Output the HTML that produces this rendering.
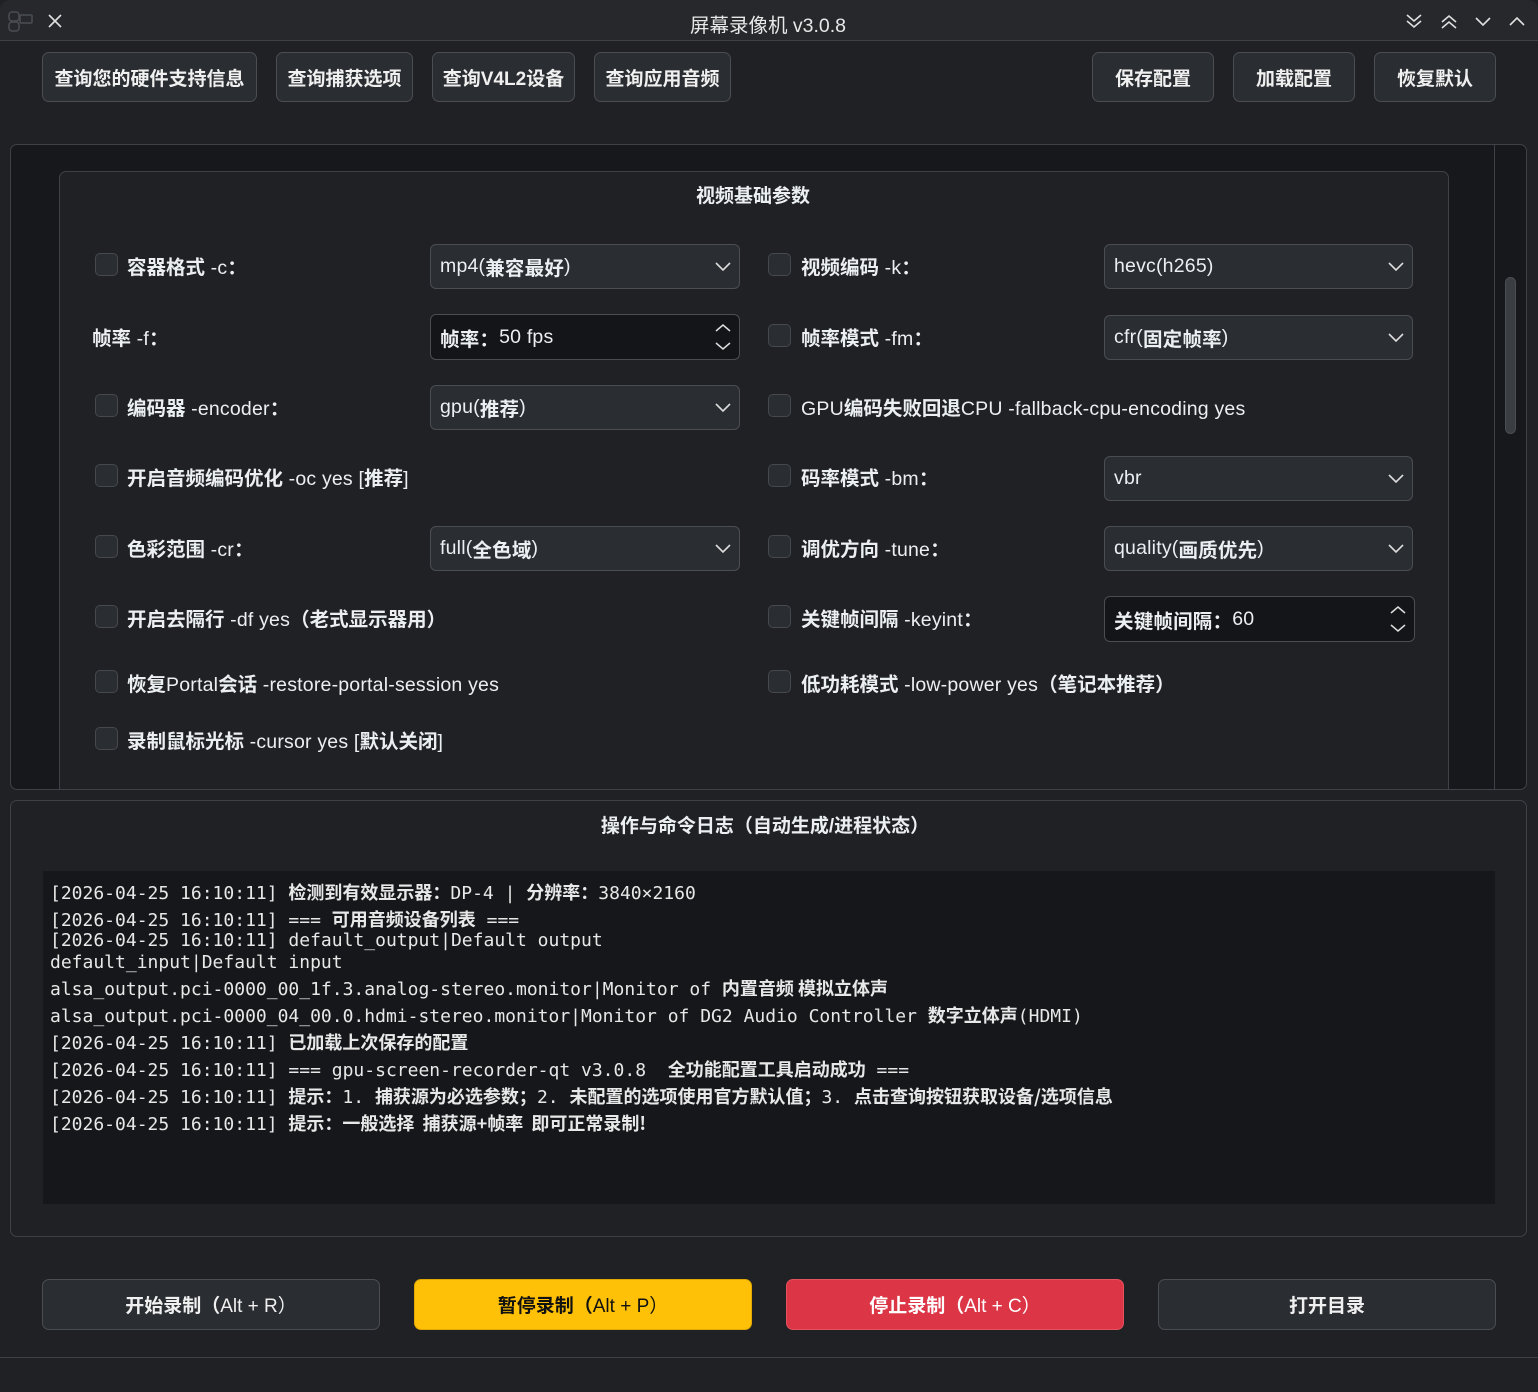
<!DOCTYPE html>
<html><head><meta charset="utf-8">
<style>
*{box-sizing:border-box;margin:0;padding:0}
body{width:1538px;height:1392px;background:#1f2124;position:relative;overflow:hidden;font-family:"Liberation Sans","Noto Sans CJK SC",sans-serif;color:#eceff1;font-size:19px}
.a{position:absolute;white-space:nowrap}
.btn{position:absolute;background:#2a2d31;border:1.5px solid #4a4d52;border-radius:7px;display:flex;align-items:center;justify-content:center;font-size:19px;font-weight:bold;color:#f0f0f0}
.cb{position:absolute;width:23px;height:23px;border:1.5px solid #45484d;background:#2a2d31;border-radius:5px}
.lbl{position:absolute;white-space:nowrap;font-size:19.5px;line-height:24px;letter-spacing:0.2px}
.lbl b{font-weight:bold;letter-spacing:0}
.combo{position:absolute;height:45px;background:#2a2d31;border:1.5px solid #4a4d52;border-radius:6px;font-size:19.5px;padding-left:9px;display:flex;align-items:center;letter-spacing:0.2px}
.spin{background:#141518}
.combo svg{position:absolute;right:8px}
.log{position:absolute;left:50px;font-family:"DejaVu Sans Mono","Noto Sans CJK SC",monospace;font-size:18px;white-space:pre;color:#e8e8e8}
.log b{font-family:"Noto Sans CJK SC",sans-serif;font-weight:bold}
</style></head><body>
<div class="a" style="left:0;top:0;width:1538px;height:41px;background:#26282c;border-bottom:1px solid #3e4146;border-radius:10px 10px 0 0"></div>
<svg class="a" style="left:8px;top:10px" width="28" height="22" viewBox="0 0 28 22"><rect x="1" y="2" width="10" height="9" rx="3" fill="none" stroke="#4a4d52" stroke-width="1.5"/><rect x="1" y="12" width="10" height="9" rx="3" fill="none" stroke="#4a4d52" stroke-width="1.5"/><rect x="12" y="5" width="12" height="8" rx="1" fill="none" stroke="#4a4d52" stroke-width="1.5"/></svg>
<svg class="a" style="left:47px;top:13px" width="16" height="16" viewBox="0 0 16 16"><path d="M2 2L14 14M14 2L2 14" stroke="#e0e0e0" stroke-width="1.6"/></svg>
<div class="a" style="left:0;width:1536px;top:9px;text-align:center;font-size:19.5px;color:#e8e8e8">屏幕录像机 v3.0.8</div>
<svg class="a" style="left:1404px;top:12px" width="124" height="20" viewBox="0 0 124 20" fill="none" stroke="#e0e0e0" stroke-width="1.6"><path d="M3 3L10 9L17 3M3 9L10 15L17 9"/><path d="M38 10L45 4L52 10M38 16L45 10L52 16"/><path d="M72 6L79 13L86 6"/><path d="M106 13L113 6L120 13"/></svg>
<div class="btn" style="left:42px;top:52px;width:215px;height:50px">查询您的硬件支持信息</div>
<div class="btn" style="left:276px;top:52px;width:137px;height:50px">查询捕获选项</div>
<div class="btn" style="left:432px;top:52px;width:143px;height:50px">查询V4L2设备</div>
<div class="btn" style="left:594px;top:52px;width:137px;height:50px">查询应用音频</div>
<div class="btn" style="left:1092px;top:52px;width:122px;height:50px">保存配置</div>
<div class="btn" style="left:1233px;top:52px;width:122px;height:50px">加载配置</div>
<div class="btn" style="left:1374px;top:52px;width:122px;height:50px">恢复默认</div>
<div class="a" style="left:10px;top:144px;width:1517px;height:646px;background:#17181b;border:1.5px solid #3e4146;border-radius:7px;overflow:hidden">
  <div class="a" style="left:1483px;top:0;width:1px;height:646px;background:#3e4146"></div>
  <div class="a" style="left:1494px;top:132px;width:11px;height:157px;background:#3a3d42;border:1px solid #4a4d52;border-radius:6px"></div>
  <div class="a" style="left:48px;top:26px;width:1390px;height:680px;background:#1f2124;border:1.5px solid #3e4146;border-radius:7px"></div>
</div>
<div class="a" style="left:59px;width:1388px;top:181px;text-align:center;font-weight:bold;font-size:19px">视频基础参数</div>
<div class="cb" style="left:95px;top:253px"></div><div class="lbl" style="left:127px;top:256px"><b>容器格式</b> -c<b>：</b></div>
<div class="combo" style="left:430px;top:244px;width:310px">mp4(<b>兼容最好</b>)<svg width="16" height="10" viewBox="0 0 16 10"><path d="M1 1L8 8L15 1" stroke="#ddd" stroke-width="1.6" fill="none"/></svg></div>
<div class="cb" style="left:768px;top:253px"></div><div class="lbl" style="left:801px;top:256px"><b>视频编码</b> -k<b>：</b></div>
<div class="combo" style="left:1104px;top:244px;width:309px">hevc(h265)<svg width="16" height="10" viewBox="0 0 16 10"><path d="M1 1L8 8L15 1" stroke="#ddd" stroke-width="1.6" fill="none"/></svg></div>
<div class="lbl" style="left:92px;top:327px"><b>帧率</b> -f<b>：</b></div>
<div class="combo spin" style="left:430px;top:314px;width:310px;height:46px"><b>帧率：</b>50 fps<svg width="16" height="28" viewBox="0 0 16 28"><path d="M1 8L8 2L15 8M1 20L8 26L15 20" stroke="#ddd" stroke-width="1.5" fill="none"/></svg></div>
<div class="cb" style="left:768px;top:324px"></div><div class="lbl" style="left:801px;top:327px"><b>帧率模式</b> -fm<b>：</b></div>
<div class="combo" style="left:1104px;top:315px;width:309px">cfr(<b>固定帧率</b>)<svg width="16" height="10" viewBox="0 0 16 10"><path d="M1 1L8 8L15 1" stroke="#ddd" stroke-width="1.6" fill="none"/></svg></div>
<div class="cb" style="left:95px;top:394px"></div><div class="lbl" style="left:127px;top:397px"><b>编码器</b> -encoder<b>：</b></div>
<div class="combo" style="left:430px;top:385px;width:310px">gpu(<b>推荐</b>)<svg width="16" height="10" viewBox="0 0 16 10"><path d="M1 1L8 8L15 1" stroke="#ddd" stroke-width="1.6" fill="none"/></svg></div>
<div class="cb" style="left:768px;top:394px"></div><div class="lbl" style="left:801px;top:397px">GPU<b>编码失败回退</b>CPU -fallback-cpu-encoding yes</div>
<div class="cb" style="left:95px;top:464px"></div><div class="lbl" style="left:127px;top:467px"><b>开启音频编码优化</b> -oc yes [<b>推荐</b>]</div>
<div class="cb" style="left:768px;top:464px"></div><div class="lbl" style="left:801px;top:467px"><b>码率模式</b> -bm<b>：</b></div>
<div class="combo" style="left:1104px;top:456px;width:309px">vbr<svg width="16" height="10" viewBox="0 0 16 10"><path d="M1 1L8 8L15 1" stroke="#ddd" stroke-width="1.6" fill="none"/></svg></div>
<div class="cb" style="left:95px;top:535px"></div><div class="lbl" style="left:127px;top:538px"><b>色彩范围</b> -cr<b>：</b></div>
<div class="combo" style="left:430px;top:526px;width:310px">full(<b>全色域</b>)<svg width="16" height="10" viewBox="0 0 16 10"><path d="M1 1L8 8L15 1" stroke="#ddd" stroke-width="1.6" fill="none"/></svg></div>
<div class="cb" style="left:768px;top:535px"></div><div class="lbl" style="left:801px;top:538px"><b>调优方向</b> -tune<b>：</b></div>
<div class="combo" style="left:1104px;top:526px;width:309px">quality(<b>画质优先</b>)<svg width="16" height="10" viewBox="0 0 16 10"><path d="M1 1L8 8L15 1" stroke="#ddd" stroke-width="1.6" fill="none"/></svg></div>
<div class="cb" style="left:95px;top:605px"></div><div class="lbl" style="left:127px;top:608px"><b>开启去隔行</b> -df yes<b>（老式显示器用）</b></div>
<div class="cb" style="left:768px;top:605px"></div><div class="lbl" style="left:801px;top:608px"><b>关键帧间隔</b> -keyint<b>：</b></div>
<div class="combo spin" style="left:1104px;top:596px;width:311px;height:46px"><b>关键帧间隔：</b>60<svg width="16" height="28" viewBox="0 0 16 28"><path d="M1 8L8 2L15 8M1 20L8 26L15 20" stroke="#ddd" stroke-width="1.5" fill="none"/></svg></div>
<div class="cb" style="left:95px;top:670px"></div><div class="lbl" style="left:127px;top:673px"><b>恢复</b>Portal<b>会话</b> -restore-portal-session yes</div>
<div class="cb" style="left:768px;top:670px"></div><div class="lbl" style="left:801px;top:673px"><b>低功耗模式</b> -low-power yes<b>（笔记本推荐）</b></div>
<div class="cb" style="left:95px;top:727px"></div><div class="lbl" style="left:127px;top:730px"><b>录制鼠标光标</b> -cursor yes [<b>默认关闭</b>]</div>
<div class="a" style="left:10px;top:800px;width:1517px;height:437px;border:1.5px solid #3e4146;border-radius:7px"></div>
<div class="a" style="left:10px;width:1510px;top:811px;text-align:center;font-weight:bold;font-size:19px">操作与命令日志（自动生成/进程状态）</div>
<div class="a" style="left:43px;top:871px;width:1452px;height:333px;background:#16171a"></div>
<div class="log" style="top:879px">[2026-04-25 16:10:11] <b>检测到有效显示器：</b>DP-4 | <b>分辨率：</b>3840×2160</div>
<div class="log" style="top:906px">[2026-04-25 16:10:11] === <b>可用音频设备列表</b> ===</div>
<div class="log" style="top:930px">[2026-04-25 16:10:11] default_output|Default output</div>
<div class="log" style="top:952px">default_input|Default input</div>
<div class="log" style="top:975px">alsa_output.pci-0000_00_1f.3.analog-stereo.monitor|Monitor of <b>内置音频 模拟立体声</b></div>
<div class="log" style="top:1002px">alsa_output.pci-0000_04_00.0.hdmi-stereo.monitor|Monitor of DG2 Audio Controller <b>数字立体声</b>(HDMI)</div>
<div class="log" style="top:1029px">[2026-04-25 16:10:11] <b>已加载上次保存的配置</b></div>
<div class="log" style="top:1056px">[2026-04-25 16:10:11] === gpu-screen-recorder-qt v3.0.8  <b>全功能配置工具启动成功</b> ===</div>
<div class="log" style="top:1083px">[2026-04-25 16:10:11] <b>提示：</b>1. <b>捕获源为必选参数；</b>2. <b>未配置的选项使用官方默认值；</b>3. <b>点击查询按钮获取设备/选项信息</b></div>
<div class="log" style="top:1110px">[2026-04-25 16:10:11] <b>提示：一般选择  捕获源+帧率  即可正常录制!</b></div>
<div class="btn" style="left:42px;top:1279px;width:338px;height:51px;font-weight:normal"><b>开始录制（</b>Alt + R）</div>
<div class="btn" style="left:414px;top:1279px;width:338px;height:51px;background:#ffc107;border-color:#e0a800;color:#111;font-weight:normal"><b>暂停录制（</b>Alt + P）</div>
<div class="btn" style="left:786px;top:1279px;width:338px;height:51px;background:#dc3545;border-color:#e4515f;color:#fff;font-weight:normal"><b>停止录制（</b>Alt + C）</div>
<div class="btn" style="left:1158px;top:1279px;width:338px;height:51px">打开目录</div>
<div class="a" style="left:0;top:1357px;width:1538px;height:1px;background:#3e4146"></div>
</body></html>
